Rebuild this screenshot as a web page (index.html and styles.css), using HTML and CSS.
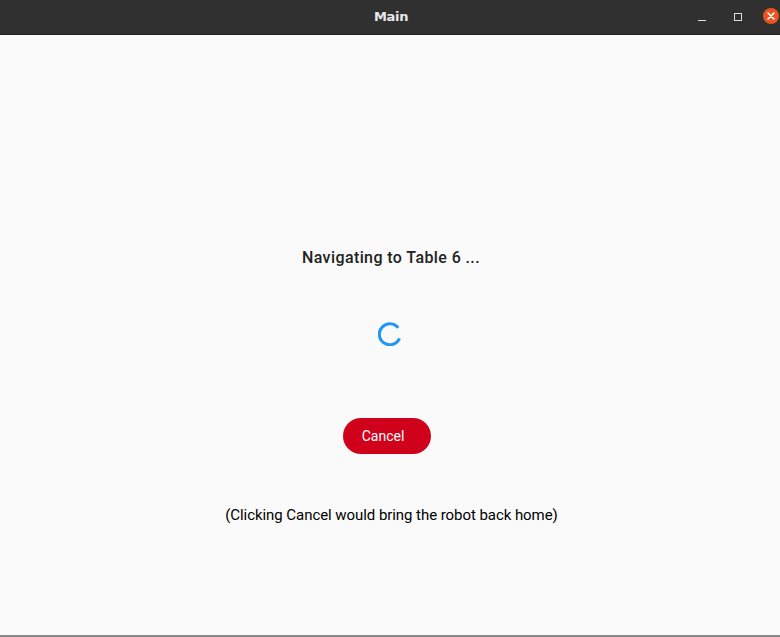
FILE: index.html
```html
<!DOCTYPE html>
<html>
<head>
<meta charset="utf-8">
<link rel="stylesheet" href="styles.css">
</head>
<body>
<div class="window">
  <header class="titlebar">
    <span class="title">Main</span>
    <div class="controls">
      <span class="ctl min"></span>
      <span class="ctl max"></span>
      <span class="ctl close">
        <svg width="16" height="16" viewBox="0 0 16 16"><path d="M5 5 L11 11 M11 5 L5 11" stroke="#fff" stroke-width="1.6" stroke-linecap="round"/></svg>
      </span>
    </div>
  </header>
  <main class="content">
    <h1 class="heading">Navigating to Table 6 ...</h1>
    <svg class="spinner" width="24" height="24" viewBox="0 0 24 24">
      <path d="M20.2 5.9 A10.5 10.5 0 1 0 21.5 16.4" fill="none" stroke="#2196f3" stroke-width="3"/>
    </svg>
    <button class="cancel">Cancel</button>
    <p class="note">(Clicking Cancel would bring the robot back home)</p>
  </main>
</div>
</body>
</html>
```
FILE: styles.css
```css
html, body {
  margin: 0;
  padding: 0;
  background: #fafafa;
}
.window {
  width: 780px;
  height: 637px;
  display: flex;
  flex-direction: column;
  overflow: hidden;
}
.titlebar {
  height: 35px;
  flex: none;
  background: #303030;
  border-bottom: 1px solid #222;
  box-sizing: border-box;
  position: relative;
  display: flex;
  align-items: center;
  justify-content: center;
}
.title {
  font-family: "DejaVu Sans", sans-serif;
  font-weight: bold;
  font-size: 13px;
  color: #e8e8e8;
  margin-top: -1px;
  margin-left: 2px;
  letter-spacing: -0.3px;
}
.controls {
  position: absolute;
  right: 0;
  top: 0;
  height: 34px;
  display: flex;
  align-items: center;
}
.ctl {
  display: block;
  box-sizing: border-box;
}
.min {
  width: 8px;
  height: 1px;
  background: #ddd;
  margin-top: 6px;
  margin-right: 28px;
}
.max {
  width: 8px;
  height: 8px;
  border: 1px solid #ddd;
  margin-right: 21px;
}
.close {
  width: 16px;
  height: 16px;
  border-radius: 50%;
  background: #e95420;
  margin-right: 1px;
  margin-top: -2px;
}
.close svg { display: block; }
.content {
  flex: 1;
  display: flex;
  flex-direction: column;
  align-items: center;
  padding-top: 213px;
  border-bottom: 2px solid #8a8a8a;
  font-family: Roboto, "Liberation Sans", sans-serif;
}
.heading {
  margin: 0 0 0 2px;
  font-size: 16px;
  line-height: 20px;
  font-weight: 500;
  color: #222;
  letter-spacing: 0.4px;
}
.spinner {
  display: block;
  margin-top: 54px;
}
.cancel {
  margin: 72px 6px 0 0;
  width: 88px;
  height: 36px;
  border: none;
  border-radius: 18px;
  background: #d0021b;
  color: #fff;
  font-family: Roboto, "Liberation Sans", sans-serif;
  font-size: 14px;
  padding: 0 8px 0 0;
}
.note {
  margin: 51px 0 0 3px;
  font-size: 15px;
  line-height: 20px;
  color: #000;
  letter-spacing: -0.06px;
}
```
